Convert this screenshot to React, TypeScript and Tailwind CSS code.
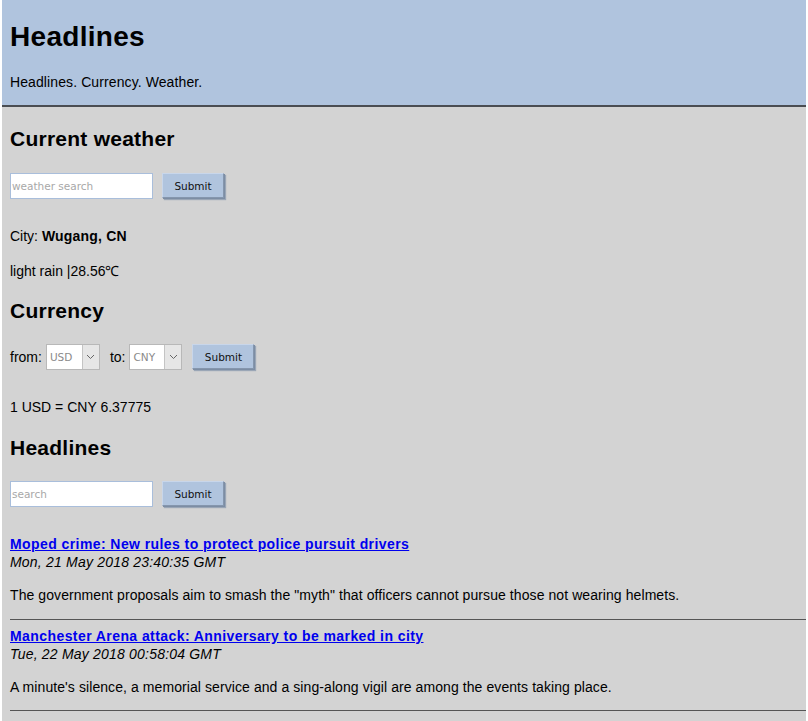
import React from "react";

const ctl = "font-['DejaVu_Sans',sans-serif] text-[10.5px]";

function SubmitBtn() {
  return (
    <button
      className={`${ctl} w-[62px] h-[25px] bg-[#b0c4de] text-[#111] border border-t-[#c8d6ea] border-l-[#c8d6ea] border-r-[#8596ad] border-b-[#8596ad] shadow-[1px_1px_0_#7c8da4,2px_2px_1px_#9aa6b6]`}
      type="button"
    >
      Submit
    </button>
  );
}

function SearchInput({ placeholder }: { placeholder: string }) {
  return (
    <input
      placeholder={placeholder}
      className={`${ctl} w-[143px] h-[26px] bg-white border border-[#a9bedb] px-[1px] outline-none placeholder:text-[#a8a8a8]`}
    />
  );
}

function FakeSelect({ value, w }: { value: string; w: string }) {
  return (
    <div className={`${w} h-[26px] flex bg-white border border-[#b8b8b8]`}>
      <div className={`${ctl} flex-1 flex items-center pl-[3px] text-[#8a8a8a]`}>{value}</div>
      <div className="w-[17px] bg-[#e6e6e6] border-l border-[#c4c4c4] flex items-center justify-center">
        <svg width="9" height="6" viewBox="0 0 9 6">
          <path d="M1 1 L4.5 4.5 L8 1" fill="none" stroke="#666" strokeWidth="1" />
        </svg>
      </div>
    </div>
  );
}

export default function App() {
  return (
    <div className="w-[808px] min-h-[721px] bg-white px-[2px] font-['Liberation_Sans',Arial,sans-serif] text-black text-[14px] leading-[16px]">
      <div className="bg-[#b0c4de] pt-[21px] pl-[8px] pb-[15px] border-b-2 border-[#4a4d52]">
        <h1 className="text-[28px] leading-[32px] font-bold tracking-[0.3px]">Headlines</h1>
        <p className="mt-[21px] tracking-[0.1px]">Headlines. Currency. Weather.</p>
      </div>
      <div className="bg-[#d3d3d3] pl-[8px] min-h-[614px] pb-[10px]">
        <h2 className="pt-[20px] text-[21px] leading-[24px] font-bold tracking-[0.25px]">Current weather</h2>
        <div className="mt-[21px] flex items-center h-[27px] gap-[9px]">
          <SearchInput placeholder="weather search" />
          <SubmitBtn />
        </div>
        <p className="mt-[29px]">
          City: <b className="tracking-[0.2px]">Wugang, CN</b>
        </p>
        <p className="mt-[19px]">light rain |28.56℃</p>

        <h2 className="mt-[20px] text-[21px] leading-[24px] font-bold tracking-[0.25px]">Currency</h2>
        <div className="mt-[20px] flex items-center h-[27px]">
          <span>from:</span>
          <div className="ml-[4px]">
            <FakeSelect value="USD" w="w-[54px]" />
          </div>
          <span className="ml-[10px]">to:</span>
          <div className="ml-[4px]">
            <FakeSelect value="CNY" w="w-[53px]" />
          </div>
          <div className="ml-[10px]">
            <SubmitBtn />
          </div>
        </div>
        <p className="mt-[29px]">1 USD = CNY 6.37775</p>

        <h2 className="mt-[21px] text-[21px] leading-[24px] font-bold tracking-[0.25px]">Headlines</h2>
        <div className="mt-[20px] flex items-center h-[27px] gap-[9px]">
          <SearchInput placeholder="search" />
          <SubmitBtn />
        </div>

        <div className="mt-[28px]">
          <div className="leading-[18px]">
            <a href="#" className="font-bold text-[#0000ee] underline tracking-[0.42px]">
              Moped crime: New rules to protect police pursuit drivers
            </a>
            <br />
            <i className="tracking-[0.2px]">Mon, 21 May 2018 23:40:35 GMT</i>
          </div>
          <p className="mt-[16px] tracking-[0.08px]">
            The government proposals aim to smash the "myth" that officers cannot pursue those not wearing helmets.
          </p>
          <hr className="mt-[16px] border-0 border-t border-[#555]" />
        </div>
        <div className="mt-[7px]">
          <div className="leading-[18px]">
            <a href="#" className="font-bold text-[#0000ee] underline tracking-[0.42px]">
              Manchester Arena attack: Anniversary to be marked in city
            </a>
            <br />
            <i className="tracking-[0.2px]">Tue, 22 May 2018 00:58:04 GMT</i>
          </div>
          <p className="mt-[16px] tracking-[0.08px]">
            A minute's silence, a memorial service and a sing-along vigil are among the events taking place.
          </p>
          <hr className="mt-[15px] border-0 border-t border-[#555]" />
        </div>
      </div>
    </div>
  );
}
